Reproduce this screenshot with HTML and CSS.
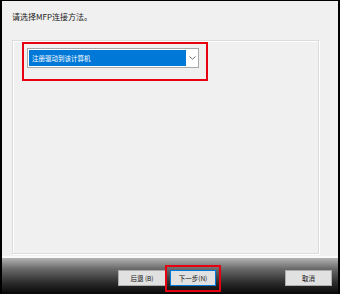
FILE: index.html
```html
<!DOCTYPE html>
<html lang="zh-CN">

<head>
  <meta charset="UTF-8" />
  <meta name="viewport" content="width=device-width, initial-scale=1.0" />
  <title>MFP 连接</title>
  <link rel="stylesheet" href="styles.css">
</head>

<body>
  <div class="window">
    <div class="content">
      <p class="prompt">请选择MFP连接方法。</p>

      <div class="group-box">
        <!-- 红框标注 -->
        <div class="mark mark-select">
          <div class="select-box">
            <div class="select-value">注册驱动到该计算机</div>
            <div class="select-arrow">
              <svg width="7" height="4" viewBox="0 0 7 4">
                <path d="M0.5 0.5 L3.5 3.2 L6.5 0.5" fill="none" stroke="#6e6e6e" stroke-width="1" />
              </svg>
            </div>
          </div>
        </div>
      </div>
    </div>

    <div class="footer">
      <button class="btn btn-back">后退 (B)</button>
      <div class="mark mark-next">
        <button class="btn btn-next">下一步(N)</button>
      </div>
      <button class="btn btn-cancel">取消</button>
    </div>
  </div>
</body>

</html>
```

FILE: styles.css
```css
body {
  margin: 0;
  padding: 0;
  background: #000;
  font-family: "Noto Sans CJK SC", "Liberation Sans", sans-serif;
}

.window {
  width: 340px;
  height: 294px;
  box-sizing: border-box;
  border-top: 1px solid #000;
  border-left: 2px solid #000;
  border-right: 2px solid #000;
  background: #f0f0f0;
  display: flex;
  flex-direction: column;
}

.content {
  flex: 1;
  display: flex;
  flex-direction: column;
  padding: 0 19px 2px 10px;
}

.prompt {
  margin: 0;
  height: 39px;
  line-height: 31px;
  font-size: 8px;
  color: #1a1a1a;
}

.group-box {
  flex: 1;
  border: 1px solid #dcdcdc;
  box-shadow: inset 1px 1px 0 #fff, 1px 1px 0 #fff;
}

/* 红框标注 */
.mark {
  border: 2px solid #e60012;
}

.mark-select {
  width: 179px;
  height: 31px;
  margin: 1px 0 0 9px;
  padding: 4px 0 0 3px;
}

.select-box {
  display: flex;
  width: 172px;
  height: 20px;
  box-sizing: border-box;
  border: 1px solid #a8a8a8;
  background: #fff;
}

.select-value {
  width: 158px;
  margin: 1px 0 1px 1px;
  background: #0078d7;
  color: #fff;
  font-size: 6.5px;
  line-height: 16px;
  padding-left: 3px;
  box-sizing: border-box;
}

.select-arrow {
  width: 12px;
  background: #fff;
  display: flex;
  align-items: center;
  justify-content: center;
}

.footer {
  height: 38px;
  box-sizing: border-box;
  border-top: 2px solid #fafafa;
  background: linear-gradient(#b4b4b4 0%, #6a6a6a 30%, #2a2a2a 70%, #080808 100%);
  display: flex;
  align-items: flex-start;
  padding: 7px 0 0 116px;
}

.btn {
  height: 16px;
  padding: 0;
  border: 1px solid #adadad;
  background: #e1e1e1;
  font-family: "Noto Sans CJK SC", "Liberation Sans", sans-serif;
  font-size: 6.5px;
  color: #111;
  line-height: 14px;
}

.btn-back {
  width: 48px;
  margin-top: 5px;
  margin-right: -1px;
}

.mark-next {
  padding: 3px 3px 4px 3px;
}

.btn-next {
  display: block;
  width: 46px;
  border-color: #0078d7;
}

.btn-cancel {
  width: 47px;
  margin-top: 5px;
  margin-left: 64px;
}
```
